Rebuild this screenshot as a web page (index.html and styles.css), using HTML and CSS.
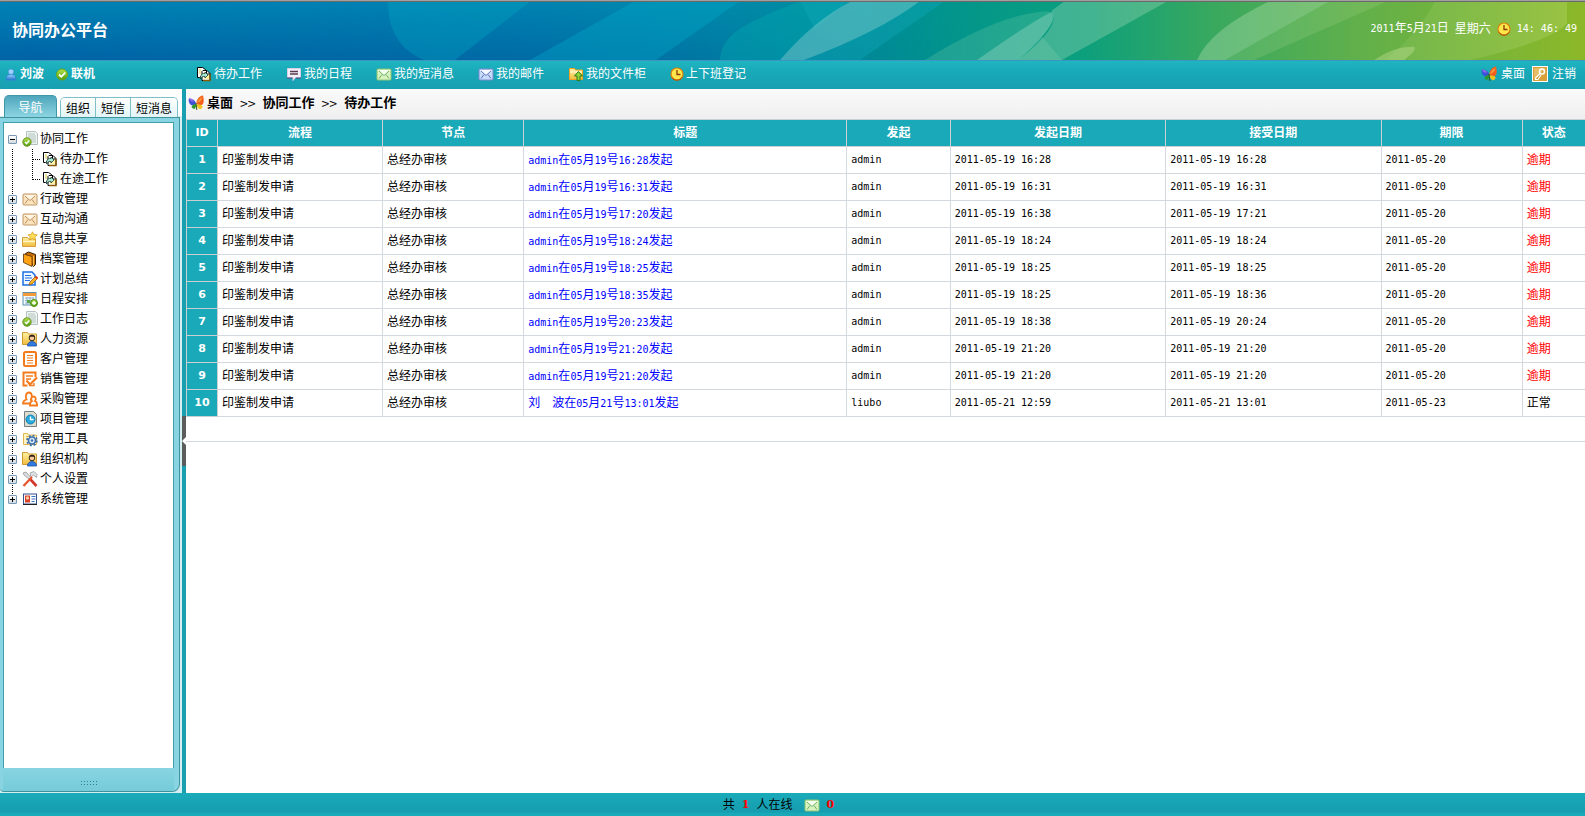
FILE: index.html
```html
<!DOCTYPE html>
<html lang="zh-CN">
<head>
<meta charset="utf-8">
<title>协同办公平台</title>
<link rel="stylesheet" href="styles.css">
</head>
<body>
<svg class="sprite" aria-hidden="true">
  <defs>
    <linearGradient id="g-green" x1="0" y1="0" x2="0" y2="1"><stop offset="0" stop-color="#b4e34a"/><stop offset="1" stop-color="#4f9d10"/></linearGradient>
    <linearGradient id="g-gold" x1="0" y1="0" x2="0" y2="1"><stop offset="0" stop-color="#fff3a8"/><stop offset="1" stop-color="#f0bb3c"/></linearGradient>
    <linearGradient id="g-blue" x1="0" y1="0" x2="0" y2="1"><stop offset="0" stop-color="#9fd4ff"/><stop offset="1" stop-color="#1f72c9"/></linearGradient>
  </defs>
  <symbol id="i-user" viewBox="0 0 12 14"><path d="M1 13V11C1 8 3 7 6 7s5 1 5 4v2z" fill="url(#g-blue)" stroke="#2f86d2"/><circle cx="6" cy="4" r="3" fill="#9cd2fc" stroke="#4a9adc"/></symbol>
  <symbol id="i-ok" viewBox="0 0 12 12"><circle cx="6" cy="6" r="5.5" fill="url(#g-green)" stroke="#6ea31a"/><path d="M3 6l2.300 2.300L9.300 4" fill="none" stroke="#fff" stroke-width="1.800"/></symbol>
  <symbol id="i-todo" viewBox="0 0 16 16"><path d="M1.500 1.500h5l3 2v7h-5l-1 1h-2z" fill="#fff" stroke="#000"/><path d="M3 3h2v5H3z" fill="#f1e79a"/><path d="M6 14.500v-9l1-1h4l3 3v7z" fill="#fff" stroke="#000"/><path d="M8 6.500h3v2.500h2v4H8z" fill="#fff2a0"/><path d="M10.500 5v3H14" fill="none" stroke="#000"/><path d="M4.500 11c.5-3 2.500-4 4.500-3.500V6l3 3-3 3v-1.500C7.500 10 6 10.500 4.500 13z" fill="#a8ecd8" stroke="#1b3a30" stroke-width=".8"/><path d="M7 14.500h7V8" fill="none" stroke="#8a5a00" stroke-width="1.400"/></symbol>
  <symbol id="i-chat" viewBox="0 0 16 16"><path d="M1.500 2.500h13v9h-5l-2.500 3v-3h-5.500z" fill="#f4f0fb" stroke="#d8cfe4"/><path d="M4 5.500h8M4 8h8" stroke="#5c3c4c" stroke-width="1.300"/><path d="M1 12h5.500M10 12h5" stroke="#5b3e7a"/></symbol>
  <symbol id="i-mail-g" viewBox="0 0 16 16"><rect x="1" y="3" width="14" height="11" rx="1" fill="#d8f2bf" stroke="#8cc670"/><path d="M2 4l6 5.500L14 4z" fill="#f7fff0"/><path d="M3 5l5 4.500L13 5M3 12.500l3-4M13 12.500l-3-4" fill="none" stroke="#5fa85a" stroke-width=".9"/></symbol>
  <symbol id="i-mail-b" viewBox="0 0 16 16"><rect x="1" y="3" width="14" height="11" rx="1" fill="#c7dcfa" stroke="#7a88cc"/><path d="M2 4l6 5.500L14 4z" fill="#f5f8ff"/><path d="M3 5l5 4.500L13 5M3 12.500l3-4M13 12.500l-3-4" fill="none" stroke="#5468b4" stroke-width=".9"/></symbol>
  <symbol id="i-mail-o" viewBox="0 0 16 16"><rect x="1" y="3" width="14" height="11" rx="1" fill="#fbe3bd" stroke="#c09566"/><path d="M2 4l6 5.500L14 4z" fill="#fff6e6"/><path d="M3 5l5 4.500L13 5M3 12.500l3-4M13 12.500l-3-4" fill="none" stroke="#b78450" stroke-width=".9"/></symbol>
  <symbol id="i-cab" viewBox="0 0 16 16"><path d="M1.500 13.500v-11h5l1 1.500h7v9.500z" fill="url(#g-gold)" stroke="#f0a01c"/><path d="M2 6h12" stroke="#fffbe0"/><path d="M10.500 5.500l4 4.500h-2.500v4.500h-3V10H6.500z" fill="#8ed33a" stroke="#2c7a1c"/></symbol>
  <symbol id="i-clock" viewBox="0 0 14 14"><circle cx="7" cy="7" r="6" fill="#ffe64a" stroke="#d9820d" stroke-width="1.200"/><path d="M7 3v4.500h3.500" fill="none" stroke="#8a3a08" stroke-width="1.300"/><path d="M2 10.500a6 6 0 0 0 10 0" fill="none" stroke="#a84a08"/></symbol>
  <symbol id="i-fly" viewBox="0 0 16 16"><path d="M8.500 9C8 5 11 1 15 .5 16 4 16 8 14.500 9.500 12 10.500 10 10 8.500 9z" fill="#f4601c"/><path d="M9 8c1-3 3-5 5.500-6-1 3-2 5-5.500 6z" fill="#ff9a3c"/><path d="M8 9C8 6 5 3.500 1 3.500c-1 2 0 5 2 6.500 2 .5 3.500 0 5-1z" fill="#3d52d8"/><path d="M1 3.500c2 0 4 1 5 3-2 .5-4-.5-5-3z" fill="#9a6be8"/><path d="M8 9c-2 0-4 1-4.500 3 1 1.500 2 2 3.500 1.800L8.500 10z" fill="#2a9a2e"/><path d="M8.500 9.500c2 0 5 0 6 1.500 0 2-1 3-2.500 3.300C10 13.500 9 12 8.500 9.500z" fill="#f3c21c"/><path d="M8 8l.8 7" stroke="#3a5a18"/></symbol>
  <symbol id="i-key" viewBox="0 0 16 16"><rect x=".5" y=".5" width="15" height="15" fill="#d9a03a" stroke="#fff"/><path d="M2 2h12L2 13z" fill="#e9bc68"/><circle cx="10" cy="5.500" r="2.500" fill="none" stroke="#fff" stroke-width="1.500"/><path d="M8 7.500L3.500 12v1.500H6L9 9" fill="none" stroke="#fff" stroke-width="1.200"/></symbol>
  <symbol id="i-work" viewBox="0 0 16 16"><path d="M4.500 .5h9l2 2v11h-11z" fill="#eef5f1" stroke="#b4c2be"/><path d="M6 3h7M6 5h8M6 7h8M9 9h5M10 11h4" stroke="#b0c2bc"/><circle cx="5" cy="11" r="4.200" fill="url(#g-green)" stroke="#6d9424"/><path d="M3 11l1.500 1.600L7.300 9.500" fill="none" stroke="#fff" stroke-width="1.500"/></symbol>
  <symbol id="i-star" viewBox="0 0 16 16"><path d="M.5 15.500v-9h5l1 1.500h7v7.500z" fill="url(#g-gold)" stroke="#d99e3a"/><path d="M1 10.500h12" stroke="#fff8d0"/><path d="M10.500 .8l1.300 2.700 3.400.3-2.400 2.200.7 3-3-1.500-3 1.500.7-3L6 3.800l3.200-.3z" fill="#ffdf5a" stroke="#d8a224" stroke-width=".8"/></symbol>
  <symbol id="i-book" viewBox="0 0 16 16"><path d="M3.500 2.500l3-1.500 7 2.500v10l-2 2z" fill="#c86f08" stroke="#3a1f00"/><path d="M1.500 3l8.500 2.500v10l-8.500-4z" fill="#ffa216" stroke="#5a3000" stroke-width=".8"/><path d="M11.500 5v10" stroke="#ffc04a"/></symbol>
  <symbol id="i-plan" viewBox="0 0 16 16"><path d="M1 1h9l3 3v10H1z" fill="#eef7ff" stroke="#1c6fe0" stroke-width="1.500"/><path d="M3 4.500h6M3 7h7M3 9.500h5" stroke="#1c6fe0" stroke-width="1.200"/><path d="M7 14l1-3 5.500-5.500 2 2L10 13z" fill="#ffb52a" stroke="#9b5a12" stroke-width=".8"/><path d="M13.500 5.500l2 2" stroke="#d33a1c" stroke-width="2"/></symbol>
  <symbol id="i-cal" viewBox="0 0 16 16"><rect x="1" y="1.500" width="13" height="12.500" fill="#f4faff" stroke="#5a8fb0"/><path d="M1 2h13v3H1z" fill="#f39a3a"/><path d="M3 7h9M3 9.500h9M3 12h7M5 6v8M8 6v8M11 6v6" stroke="#8fb2c8"/><path d="M5 9h3v3H5z" fill="#58a648"/><circle cx="12" cy="12" r="3.500" fill="url(#g-green)" stroke="#4f8c14"/><path d="M12 10v4M10 12h4" stroke="#fff" stroke-width="1.300"/></symbol>
  <symbol id="i-hr" viewBox="0 0 16 16"><path d="M.5 13.500v-12h5l1 1.500h8v10.500z" fill="url(#g-gold)" stroke="#cf9a34"/><circle cx="10" cy="7" r="2.800" fill="#f6c79a" stroke="#3d2a18"/><path d="M7 6c0-3 6-3 6 0-2-.5-4-.5-6 0z" fill="#33241a"/><path d="M5.500 15c0-3 2-4.500 4.500-4.500S14.500 12 14.500 15z" fill="#2f7be0" stroke="#1c4fa8" stroke-width=".8"/></symbol>
  <symbol id="i-list" viewBox="0 0 16 16"><rect x="2" y="1" width="12" height="14" rx="1.500" fill="#fff" stroke="#f47a1c" stroke-width="2"/><path d="M5 4.500h6M5 7h6M5 9.500h6M5 12h6" stroke="#f47a1c"/></symbol>
  <symbol id="i-sale" viewBox="0 0 16 16"><path d="M13.500 6V1.500H1.500v13h4" fill="#fff" stroke="#f47a1c" stroke-width="2"/><path d="M4 5h7M4 8h5M12 12v2.500H7" fill="none" stroke="#f47a1c" stroke-width="1.400"/><path d="M4.500 9.500l3.500 4L15 6.500" fill="none" stroke="#f47a1c" stroke-width="2.200"/></symbol>
  <symbol id="i-buy" viewBox="0 0 16 16"><g fill="#fff" stroke="#f47a1c" stroke-width="1.800"><path d="M4.500 8.500C3 6 4 1.500 7 1.500S10.500 6 9 8.500l1 4H1c0-2.500 1.500-3.500 3.500-4z"/><path d="M10 10C8.500 8 9.500 5.500 11.500 5.500s3 2.500 1.500 4.500c1.500.5 2.200 2 2.200 4.500H8c0-2.500.5-4 2-4.500z"/></g></symbol>
  <symbol id="i-proj" viewBox="0 0 16 16"><path d="M2.500 .5h9l3 3v12h-12z" fill="#dcdcd0" stroke="#777f80"/><circle cx="8.500" cy="8.500" r="4.500" fill="#29a9dc" stroke="#1581b4"/><path d="M8.500 5.500v3h3" fill="none" stroke="#fff" stroke-width="1.300"/></symbol>
  <symbol id="i-tool" viewBox="0 0 16 16"><path d="M1.500 13.500v-11h4l1 1.500h8v9.500z" fill="#fff4c4" stroke="#e3b54c"/><path d="M4 5.500h3M4 8h2" stroke="#e3b54c"/><circle cx="10" cy="9.500" r="3.500" fill="#dceafa" stroke="#3a6dad" stroke-width="1.600"/><circle cx="10" cy="9.500" r="5" fill="none" stroke="#3a6dad" stroke-width="1.500" stroke-dasharray="2 1.930"/><circle cx="10" cy="9.500" r="1.200" fill="#3a6dad"/></symbol>
  <symbol id="i-set" viewBox="0 0 16 16"><path d="M1 2l3-1 5 5.500-1.500 2L2 4z" fill="#d9dcde" stroke="#999" stroke-width=".8"/><path d="M8.500 8.500l6 6.500" stroke="#d0382c" stroke-width="2.600"/><path d="M8 2l4-1.500 3 3-.5 3-3-2.500-2.500 2z" fill="#dfe3e6" stroke="#979ca0" stroke-width=".8"/><path d="M10 6l-8.500 9" stroke="#e8532c" stroke-width="2.200"/></symbol>
  <symbol id="i-sys" viewBox="0 0 16 16"><rect x="1.500" y="3" width="13" height="10" fill="#fff" stroke="#33538e"/><path d="M1 13.500h14" stroke="#222"/><path d="M3 4.500h5v7H3z" fill="#d8402a"/><circle cx="5.500" cy="7" r="1.700" fill="#f6c79a"/><path d="M9.500 5.500h4M9.500 8h4M9.500 10.500h3" stroke="#3a74c8" stroke-width="1.200"/></symbol>
</svg>

<header class="banner">
  <svg class="art" viewBox="0 0 1585 58" preserveAspectRatio="none" aria-hidden="true">
    <defs>
      <linearGradient id="base">
        <stop offset="0" stop-color="#0076ab"/><stop offset=".3" stop-color="#0079a9"/><stop offset=".45" stop-color="#0087a4"/><stop offset=".56" stop-color="#009193"/><stop offset=".68" stop-color="#0a9f7e"/><stop offset=".76" stop-color="#36a860"/><stop offset=".86" stop-color="#62b04a"/><stop offset="1" stop-color="#8cb828"/>
      </linearGradient>
      <linearGradient id="shade" x1="0" y1="0" x2="0" y2="1"><stop offset="0" stop-color="#0090c0" stop-opacity=".5"/><stop offset="1" stop-color="#0050a0" stop-opacity=".5"/></linearGradient>
      <linearGradient id="fade"><stop offset="0" stop-color="#fff"/><stop offset=".4" stop-color="#fff" stop-opacity=".7"/><stop offset=".62" stop-color="#fff" stop-opacity="0"/></linearGradient>
      <linearGradient id="lime"><stop offset="0" stop-color="#d8f0a0" stop-opacity=".08"/><stop offset="1" stop-color="#d8f0a0" stop-opacity=".2"/></linearGradient>
      <mask id="m"><rect width="1585" height="58" fill="url(#fade)"/></mask>
    </defs>
    <rect width="1585" height="58" fill="url(#base)"/>
    <rect width="1585" height="58" fill="url(#shade)" mask="url(#m)"/>
    <path d="M388 0C388 30 400 48 424 58H455L531 0z" fill="#00a8c4" fill-opacity=".35"/>
    <path d="M635 0H740L656 58H530z" fill="#00a8c8" fill-opacity=".4"/>
    <path d="M720 58C722 30 750 20 800 0H848L780 58z" fill="#00aab0" fill-opacity=".4"/>
    <path d="M800 0H945L860 58H780L815 28z" fill="#10a8b8" fill-opacity=".4"/>
    <path d="M780 58Q815 18 852 0H920Q880 30 804 58z" fill="#a8dcd8" fill-opacity=".35"/>
    <path d="M925 58Q1000 12 1048 10 1060 14 1042 35L1062 58z" fill="#6cc8a8" fill-opacity=".28"/>
    <path d="M977 58Q1035 18 1053 10 1060 22 1018 58z" fill="#b8e4cc" fill-opacity=".32"/>
    <path d="M1018 58Q1062 25 1052 9L1065 0H1168L1062 58z" fill="#a0d8b8" fill-opacity=".36"/>
    <path d="M1197 58Q1210 28 1270 0H1330L1225 58z" fill="#c8e8c0" fill-opacity=".32"/>
    <path d="M1225 58L1330 0H1388L1254 58z" fill="#c8e8a0" fill-opacity=".16"/>
    <path d="M1374 58Q1395 44 1414 45 1418 48 1404 58z" fill="#e0f0b0" fill-opacity=".3"/>
    <path d="M1385 58Q1420 30 1435 0H1567V22Q1550 40 1470 58z" fill="url(#lime)"/>
  </svg>
  <h1>协同办公平台</h1>
  <p class="now"><span><s>2011</s>年<s>5</s>月<s>21</s>日</span><span>星期六</span><svg class="ic14"><use href="#i-clock"/></svg><time class="mono">14: 46: 49</time></p>
</header>

<div class="toolbar">
  <div class="who"><svg class="ic12"><use href="#i-user"/></svg><b>刘波</b><svg class="ic12"><use href="#i-ok"/></svg><b>联机</b></div>
  <nav class="shortcuts">
    <a href="#"><svg class="ic"><use href="#i-todo"/></svg>待办工作</a>
    <a href="#"><svg class="ic"><use href="#i-chat"/></svg>我的日程</a>
    <a href="#"><svg class="ic"><use href="#i-mail-g"/></svg>我的短消息</a>
    <a href="#"><svg class="ic"><use href="#i-mail-b"/></svg>我的邮件</a>
    <a href="#"><svg class="ic"><use href="#i-cab"/></svg>我的文件柜</a>
    <a href="#"><svg class="ic14"><use href="#i-clock"/></svg>上下班登记</a>
  </nav>
  <div class="session">
    <a href="#"><svg class="ic"><use href="#i-fly"/></svg>桌面</a>
    <a href="#"><svg class="ic"><use href="#i-key"/></svg>注销</a>
  </div>
</div>

<div class="body">
  <aside class="side">
    <div class="tabs">
      <button class="tab active">导航</button>
      <div class="rest"><button class="tab">组织</button><button class="tab">短信</button><button class="tab">短消息</button></div>
    </div>
    <div class="panel">
      <ul class="tree">
        <li><div class="row"><button class="tg open" aria-label="收起"></button><svg class="ic"><use href="#i-work"/></svg><a href="#">协同工作</a></div>
          <ul class="sub">
            <li class="row"><svg class="ic"><use href="#i-todo"/></svg><a href="#">待办工作</a></li>
            <li class="row"><svg class="ic"><use href="#i-todo"/></svg><a href="#">在途工作</a></li>
          </ul>
        </li>
        <li class="row"><button class="tg" aria-label="展开"></button><svg class="ic"><use href="#i-mail-o"/></svg><a href="#">行政管理</a></li>
        <li class="row"><button class="tg" aria-label="展开"></button><svg class="ic"><use href="#i-mail-o"/></svg><a href="#">互动沟通</a></li>
        <li class="row"><button class="tg" aria-label="展开"></button><svg class="ic"><use href="#i-star"/></svg><a href="#">信息共享</a></li>
        <li class="row"><button class="tg" aria-label="展开"></button><svg class="ic"><use href="#i-book"/></svg><a href="#">档案管理</a></li>
        <li class="row"><button class="tg" aria-label="展开"></button><svg class="ic"><use href="#i-plan"/></svg><a href="#">计划总结</a></li>
        <li class="row"><button class="tg" aria-label="展开"></button><svg class="ic"><use href="#i-cal"/></svg><a href="#">日程安排</a></li>
        <li class="row"><button class="tg" aria-label="展开"></button><svg class="ic"><use href="#i-work"/></svg><a href="#">工作日志</a></li>
        <li class="row"><button class="tg" aria-label="展开"></button><svg class="ic"><use href="#i-hr"/></svg><a href="#">人力资源</a></li>
        <li class="row"><button class="tg" aria-label="展开"></button><svg class="ic"><use href="#i-list"/></svg><a href="#">客户管理</a></li>
        <li class="row"><button class="tg" aria-label="展开"></button><svg class="ic"><use href="#i-sale"/></svg><a href="#">销售管理</a></li>
        <li class="row"><button class="tg" aria-label="展开"></button><svg class="ic"><use href="#i-buy"/></svg><a href="#">采购管理</a></li>
        <li class="row"><button class="tg" aria-label="展开"></button><svg class="ic"><use href="#i-proj"/></svg><a href="#">项目管理</a></li>
        <li class="row"><button class="tg" aria-label="展开"></button><svg class="ic"><use href="#i-tool"/></svg><a href="#">常用工具</a></li>
        <li class="row"><button class="tg" aria-label="展开"></button><svg class="ic"><use href="#i-hr"/></svg><a href="#">组织机构</a></li>
        <li class="row"><button class="tg" aria-label="展开"></button><svg class="ic"><use href="#i-set"/></svg><a href="#">个人设置</a></li>
        <li class="row"><button class="tg" aria-label="展开"></button><svg class="ic"><use href="#i-sys"/></svg><a href="#">系统管理</a></li>
      </ul>
      <div class="grip"><i></i></div>
    </div>
  </aside>
  <div class="splitter"><button aria-label="隐藏导航"><svg viewBox="0 0 4 8"><path d="M4 0v8L0 4z" fill="#fff"/></svg></button></div>
  <main>
    <nav class="crumbs"><svg class="ic"><use href="#i-fly"/></svg><a href="#">桌面</a><span>&gt;&gt;</span><a href="#">协同工作</a><span>&gt;&gt;</span><a href="#">待办工作</a></nav>
    <table>
      <colgroup><col class="c-id"><col class="c-flow"><col class="c-node"><col class="c-title"><col class="c-by"><col class="c-date"><col class="c-date"><col class="c-node"><col></colgroup>
      <thead><tr><th>ID</th><th>流程</th><th>节点</th><th>标题</th><th>发起</th><th>发起日期</th><th>接受日期</th><th>期限</th><th>状态</th></tr></thead>
      <tbody>
        <tr><th>1</th><td>印鉴制发申请</td><td>总经办审核</td><td><a href="#"><s>admin</s>在<s>05</s>月<s>19</s>号<s>16:28</s>发起</a></td><td class="mono">admin</td><td class="mono">2011-05-19 16:28</td><td class="mono">2011-05-19 16:28</td><td class="mono">2011-05-20</td><td class="late">逾期</td></tr>
        <tr><th>2</th><td>印鉴制发申请</td><td>总经办审核</td><td><a href="#"><s>admin</s>在<s>05</s>月<s>19</s>号<s>16:31</s>发起</a></td><td class="mono">admin</td><td class="mono">2011-05-19 16:31</td><td class="mono">2011-05-19 16:31</td><td class="mono">2011-05-20</td><td class="late">逾期</td></tr>
        <tr><th>3</th><td>印鉴制发申请</td><td>总经办审核</td><td><a href="#"><s>admin</s>在<s>05</s>月<s>19</s>号<s>17:20</s>发起</a></td><td class="mono">admin</td><td class="mono">2011-05-19 16:38</td><td class="mono">2011-05-19 17:21</td><td class="mono">2011-05-20</td><td class="late">逾期</td></tr>
        <tr><th>4</th><td>印鉴制发申请</td><td>总经办审核</td><td><a href="#"><s>admin</s>在<s>05</s>月<s>19</s>号<s>18:24</s>发起</a></td><td class="mono">admin</td><td class="mono">2011-05-19 18:24</td><td class="mono">2011-05-19 18:24</td><td class="mono">2011-05-20</td><td class="late">逾期</td></tr>
        <tr><th>5</th><td>印鉴制发申请</td><td>总经办审核</td><td><a href="#"><s>admin</s>在<s>05</s>月<s>19</s>号<s>18:25</s>发起</a></td><td class="mono">admin</td><td class="mono">2011-05-19 18:25</td><td class="mono">2011-05-19 18:25</td><td class="mono">2011-05-20</td><td class="late">逾期</td></tr>
        <tr><th>6</th><td>印鉴制发申请</td><td>总经办审核</td><td><a href="#"><s>admin</s>在<s>05</s>月<s>19</s>号<s>18:35</s>发起</a></td><td class="mono">admin</td><td class="mono">2011-05-19 18:25</td><td class="mono">2011-05-19 18:36</td><td class="mono">2011-05-20</td><td class="late">逾期</td></tr>
        <tr><th>7</th><td>印鉴制发申请</td><td>总经办审核</td><td><a href="#"><s>admin</s>在<s>05</s>月<s>19</s>号<s>20:23</s>发起</a></td><td class="mono">admin</td><td class="mono">2011-05-19 18:38</td><td class="mono">2011-05-19 20:24</td><td class="mono">2011-05-20</td><td class="late">逾期</td></tr>
        <tr><th>8</th><td>印鉴制发申请</td><td>总经办审核</td><td><a href="#"><s>admin</s>在<s>05</s>月<s>19</s>号<s>21:20</s>发起</a></td><td class="mono">admin</td><td class="mono">2011-05-19 21:20</td><td class="mono">2011-05-19 21:20</td><td class="mono">2011-05-20</td><td class="late">逾期</td></tr>
        <tr><th>9</th><td>印鉴制发申请</td><td>总经办审核</td><td><a href="#"><s>admin</s>在<s>05</s>月<s>19</s>号<s>21:20</s>发起</a></td><td class="mono">admin</td><td class="mono">2011-05-19 21:20</td><td class="mono">2011-05-19 21:20</td><td class="mono">2011-05-20</td><td class="late">逾期</td></tr>
        <tr><th>10</th><td>印鉴制发申请</td><td>总经办审核</td><td><a href="#">刘　波在<s>05</s>月<s>21</s>号<s>13:01</s>发起</a></td><td class="mono">liubo</td><td class="mono">2011-05-21 12:59</td><td class="mono">2011-05-21 13:01</td><td class="mono">2011-05-23</td><td class="done">正常</td></tr>
      </tbody>
    </table>
    <div class="pager"></div>
  </main>
</div>

<footer><span>共</span><b>1</b><span>人在线</span><svg class="ic"><use href="#i-mail-g"/></svg><b>0</b></footer>
</body>
</html>
```
FILE: styles.css
```css
* { box-sizing: border-box; }
body {
  margin: 0;
  min-height: 100vh;
  display: flex;
  flex-direction: column;
  font: 12px/16px "Liberation Sans", "Noto Sans CJK SC", sans-serif;
  color: #000;
  background: #fff;
}
a { color: inherit; text-decoration: none; }
ul { list-style: none; margin: 0; padding: 0; }
button { font: inherit; padding: 0; border: 0; white-space: nowrap; }
.sprite { position: absolute; width: 0; height: 0; }
.ic { width: 16px; height: 16px; flex: none; }
.ic14 { width: 14px; height: 14px; flex: none; }
.ic12 { width: 12px; height: 13px; flex: none; }
.mono, s { font-family: "DejaVu Sans Mono", monospace; font-size: 10px; text-decoration: none; }

/* banner */
.banner {
  position: relative;
  height: 61px;
  display: flex;
  align-items: center;
  justify-content: space-between;
  padding: 0 8px 0 12px;
  border-top: 1px solid #a0a0a0;
  border-bottom: 1px solid #3a96c4;
  box-shadow: inset 0 1px #696969;
  color: #fff;
}
.art { position: absolute; z-index: -1; inset: 0; width: 100%; height: 100%; }
.banner h1 { margin: 0; font-size: 16px; line-height: 20px; }
.now { margin: 0 0 4px; display: flex; align-items: center; gap: 6px; }

/* toolbar */
.toolbar {
  height: 28px;
  display: flex;
  align-items: center;
  padding: 0 9px 2px 5px;
  color: #fff;
  background: linear-gradient(#20b4c0, #18a9b8 40%, #189fb0);
}
.who { width: 191px; display: flex; align-items: center; gap: 3px; }
.who b + svg { margin-left: 9px; }
.shortcuts { display: flex; gap: 24px; flex: 1; }
.shortcuts a, .session a { display: flex; align-items: center; gap: 2px; }
.session { display: flex; gap: 7px; }
.session a { gap: 4px; }

/* layout */
.body { flex: 1; display: flex; }
.side {
  width: 182px;
  flex: none;
  display: flex;
  flex-direction: column;
  padding: 6px 2px 1px 0;
  background: linear-gradient(#fff 27px, #d5eef2 27px);
}
.tabs { display: flex; align-items: flex-end; height: 22px; padding-left: 4px; }
.rest {
  display: flex;
  margin-left: 3px;
  border: 1px solid #7fc0c8;
  border-bottom: 0;
  border-radius: 5px 5px 0 0;
  overflow: hidden;
}
.tab { height: 19px; padding: 3px 5px 0; background: linear-gradient(#fff, #e2f4f6); color: #000; }
.tab + .tab { border-left: 1px solid #7fc0c8; }
.tab.active {
  width: 53px;
  height: 22px;
  color: #fff;
  border: 1px solid #3f98a8;
  border-bottom: 0;
  border-radius: 5px 5px 0 0;
  background: linear-gradient(#4fa6bc, #8cd5e2);
}
.panel {
  flex: 1;
  display: flex;
  flex-direction: column;
  padding: 4px 5px 0 3px;
  border: solid #3f949c;
  border-width: 1px 1px 1px 0;
  border-radius: 0 0 8px 4px;
  background: #88d4e2;
}

/* tree */
.tree {
  flex: 1;
  padding: 6px 0 0;
  border: 1px solid #3f9fa8;
  border-bottom: 0;
  background: #fff;
}
.tree > li { padding-left: 4px; background: linear-gradient(#000 50%, transparent 50%) 8px 0 / 1px 2px repeat-y; }
.tree > li:first-child > .row { background: #fff; }
.tree > li:last-child {
  background:
    linear-gradient(#fff, #fff) 0 100% / 100% 10px no-repeat,
    linear-gradient(#000 50%, transparent 50%) 8px 0 / 1px 2px repeat-y;
}
.row { display: flex; align-items: center; height: 20px; }
.row .ic { margin-right: 2px; }
.tg {
  width: 9px;
  height: 9px;
  margin-right: 5px;
  border: 1px solid #7898b5;
  border-radius: 1px;
  background:
    linear-gradient(#000, #000) 50% 50% / 5px 1px no-repeat,
    linear-gradient(#000, #000) 50% 50% / 1px 5px no-repeat,
    linear-gradient(#fff, #cfd8e0);
}
.tg.open {
  background:
    linear-gradient(#000, #000) 50% 50% / 5px 1px no-repeat,
    linear-gradient(#fff, #d4d8dc);
}
.sub { margin-left: 24px; background: linear-gradient(#000 50%, transparent 50%) 0 0 / 1px 2px repeat-y; }
.sub .row {
  padding-left: 10px;
  background: repeating-linear-gradient(90deg, #000 0 1px, transparent 1px 2px) 1px 10px / 8px 1px no-repeat;
}
.sub .row:last-child {
  background:
    repeating-linear-gradient(90deg, #000 0 1px, transparent 1px 2px) 1px 10px / 8px 1px no-repeat,
    linear-gradient(#fff, #fff) 0 11px / 1px 9px no-repeat;
}
.grip {
  height: 23px;
  display: flex;
  align-items: center;
  justify-content: center;
  padding-top: 6px;
  background: linear-gradient(#88d4e2, #76ccda);
}
.grip i { width: 17px; height: 5px; background: radial-gradient(#2f7f8c 1px, transparent 1px) 0 0 / 3px 3px; }

/* splitter */
.splitter { width: 4px; flex: none; display: flex; align-items: center; background: #18a0b0; }
.splitter button { width: 4px; height: 50px; display: flex; align-items: center; background: #5c5c5c; }
.splitter svg { width: 4px; height: 8px; }

/* content */
main { flex: 1; min-width: 0; }
.crumbs {
  height: 30px;
  display: flex;
  align-items: center;
  padding: 0 2px 2px;
  gap: 7px;
  font-size: 13px;
  font-weight: bold;
  background: linear-gradient(#fafafa, #efefef);
}
.crumbs .ic { margin-right: -4px; }
.crumbs span { font-family: "Noto Sans CJK SC", sans-serif; font-size: 14px; font-weight: normal; }
table { width: 100%; table-layout: fixed; border-collapse: collapse; }
.c-id { width: 31px; }
.c-flow { width: 11.8%; }
.c-node { width: 10.1%; }
.c-title { width: 23.1%; }
.c-by { width: 7.4%; }
.c-date { width: 15.4%; }
th, td { height: 27px; padding: 0 4px; border: 1px solid #d3d9de; text-align: left; white-space: nowrap; overflow: hidden; }
td:last-child, th:last-child { border-right: 0; }
th {
  padding: 0;
  text-align: center;
  color: #fff;
  background: #1aa9b8;
  border-color: #c8d0d4;
  font-family: "DejaVu Sans", "Noto Sans CJK SC", sans-serif;
}
tbody th, th:first-child { font-size: 11px; }
td a { color: #00f; }
.late { color: #f00; }
.pager { height: 25px; border-bottom: 1px solid #d3d9de; }

footer {
  height: 23px;
  display: flex;
  align-items: center;
  justify-content: center;
  gap: 7px;
  padding-right: 28px;
  background: linear-gradient(#1aabb9, #169db0 80%, #1aa9b8 90%);
}
footer svg { margin-left: 4px; }
footer b { color: #f00; font-family: "DejaVu Serif", serif; font-size: 11px; }
```
